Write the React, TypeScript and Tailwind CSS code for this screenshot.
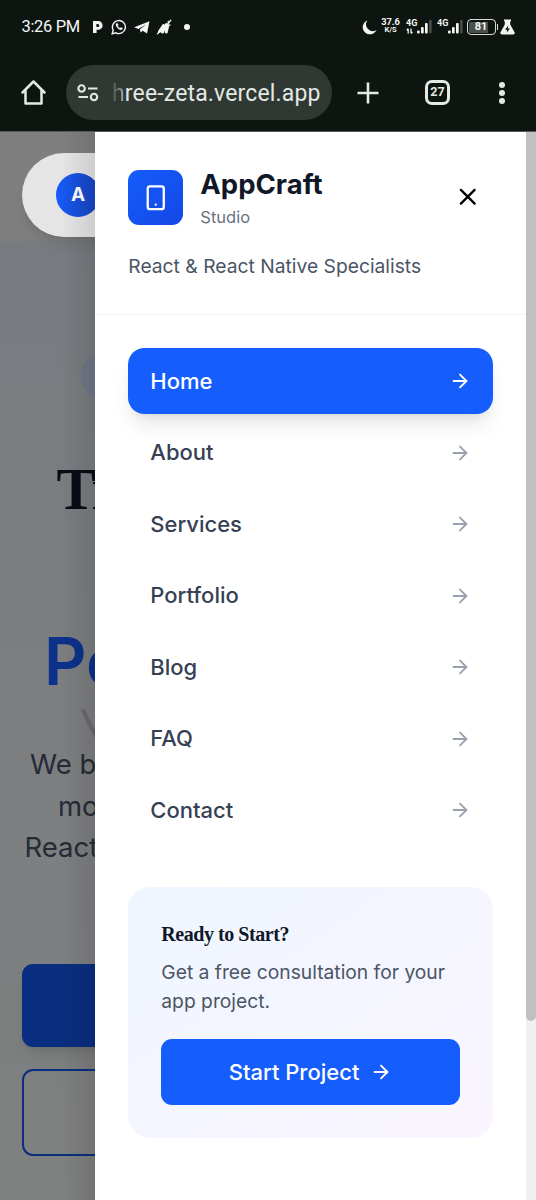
import { ArrowRight, Smartphone, X } from "lucide-react";

const navItems = ["Home", "About", "Services", "Portfolio", "Blog", "FAQ", "Contact"];

const Signal = ({ arrows }: { arrows?: boolean }) => (
  <svg className="w-[26px] h-4 shrink-0" viewBox="0 0 26 16" fill="#f4f6f4">
    <text x="0" y="7.4" fontSize="9" fontWeight="700" fontFamily="Roboto, sans-serif">
      4G
    </text>
    {arrows && (
      <path d="M2.2 14.5V9.8M.8 11.2 2.2 9.6M5 9.6v4.7M6.4 13 5 14.5" stroke="#f4f6f4" strokeWidth="1.3" fill="none" />
    )}
    <rect x="11" y="11.5" width="2.7" height="3" rx="1" />
    <rect x="15" y="8" width="2.7" height="6.5" rx="1" />
    <rect x="19" y="4" width="2.7" height="10.5" rx="1" />
    <rect x="23.2" y="0.8" width="2.4" height="13.7" rx="1" fill="#4b504c" />
  </svg>
);

const StatusBar = () => (
  <div className="flex h-[54px] items-center pl-[21.5px] pr-[21px] text-[#f4f6f4]">
    <span className="w-[58px] whitespace-nowrap text-[16.5px] tracking-[-0.35px]">3:26 PM</span>
    <svg className="ml-[12px] h-[14px] w-[11px]" viewBox="0 0 11 14" fill="#f4f6f4" fillRule="evenodd">
      <path d="M1 1H6.2a4.3 4.300 0 0 1 0 8.800H4.600V13H1ZM4.400 4V7H5.800a1.500 1.500 0 0 0 0-3Z" />
    </svg>
    <svg className="ml-[8px] h-[16px] w-[16px]" viewBox="0 0 16 16" fill="none" stroke="#f4f6f4">
      <path d="M1.2 14.8 2.2 11.2A6.5 6.5 0 1 1 4.8 13.8Z" strokeWidth="1.4" />
      <path d="M5.4 4.5c-.8.8-.5 2.3.8 3.9 1.3 1.6 3.5 2.8 4.8 2.2l.6-1.3-1.8-.9-.9.9c-1-.4-1.800-1.200-2.300-2.200l.7-.9-.7-1.700Z" fill="#f4f6f4" strokeWidth=".4" />
    </svg>
    <svg className="ml-[7px] h-[13px] w-[16px]" viewBox="0 0 16 13" fill="#f4f6f4">
      <path d="M15.500.2 13 12.600 8.700 9.700 6.700 11.600 5.800 8.400 12.200 3.300 4.400 7.900.2 6.200Z" />
    </svg>
    <svg className="ml-[6px] h-[17px] w-[16px]" viewBox="0 0 16 17" fill="none" stroke="#f4f6f4" strokeLinecap="round">
      <path d="M3.500 12.500 7.500 6.500M6.500 13l4-7.500M10.300 13l1.500-6.500" strokeWidth="3" />
      <path d="M1.500 14.800 4 11.500M11.500 5.500l3.300-4.300M12.300 4.500V2.500M12 7l2-1" strokeWidth="1.300" />
    </svg>
    <span className="ml-[12px] h-[6px] w-[6px] rounded-full bg-[#f4f6f4]" />

    <svg className="ml-auto h-[15px] w-[15px]" viewBox="0 0 15 15" fill="#f4f6f4">
      <path d="M5.4.4a7.2 7.2 0 1 0 9.1 9.7A6.8 6.8 0 0 1 5.4.4Z" />
    </svg>
    <div className="ml-[4px] mt-[-2px] flex w-[20px] flex-col items-center text-[9.3px] leading-[8px] font-bold">
      <span>37.6</span>
      <span className="text-[7.5px]">K/S</span>
    </div>
    <div className="ml-[5px] flex gap-[5px]">
      <Signal arrows />
      <Signal />
    </div>
    <div className="ml-[4px] flex h-[16px] w-[29px] items-center justify-center rounded-[4px] border-[1.5px] border-[#d9dcd9] p-[1.5px]">
      <span className="flex h-full w-full items-center justify-center rounded-[1px] bg-linear-to-r from-[#4b504c] from-80% to-transparent to-80% text-[11px] font-bold">
        81
      </span>
    </div>
    <span className="ml-[1px] h-[6px] w-[1.5px] bg-[#d9dcd9]" />
    <svg className="ml-[2px] h-[16px] w-[15px]" viewBox="0 0 15 16">
      <path d="M4 .5h7v1.8h-.8v3.2l4.3 7.7c.6 1.2 0 2.3-1.4 2.3H1.9C.5 15.500 0 14.400.5 13.200L4.800 5.500V2.300H4Z" fill="#f4f6f4" />
      <path d="M8.300 6.500 5 10.700h2.200L6.600 13.800l3.400-4.300H7.800Z" fill="#0e1511" />
    </svg>
  </div>
);

const BrowserBar = () => (
  <div className="flex h-[77px] items-center text-[#e3e9e4]">
    <svg className="ml-[20px] h-[27px] w-[27px]" viewBox="0 0 27 27" fill="none" stroke="currentColor" strokeWidth="2.5" strokeLinejoin="round" strokeLinecap="round">
      <path d="M2.500 13.500 13.500 2.500 24.500 13.500M5.500 11.500V24.500H21.500V11.500" />
    </svg>
    <div className="ml-[19px] flex h-[55px] w-[266px] items-center rounded-full bg-[#2f3832] pl-[11px]">
      <svg className="h-[20px] w-[22px]" viewBox="0 0 22 20" fill="none" stroke="currentColor" strokeWidth="2.1">
        <circle cx="4.600" cy="5.500" r="3.200" />
        <path d="M11 5.500h9.500M1.500 14h9.500" />
        <circle cx="17" cy="14" r="3.200" />
      </svg>
      <span className="mt-[3px] ml-[13px] whitespace-nowrap text-[23px] tracking-[0.15px]">
        <span className="bg-linear-to-r from-[#4b544e] to-[#a9b0ab] bg-clip-text text-transparent">h</span>
        ree-zeta.vercel.app
      </span>
    </div>
    <svg className="ml-[24px] h-[24px] w-[24px]" viewBox="0 0 24 24" stroke="currentColor" strokeWidth="2.600">
      <path d="M12 1.500v21M1.500 12h21" />
    </svg>
    <div className="ml-[45px] flex h-[25px] w-[25px] items-center justify-center rounded-[7px] border-[3px] border-[#e3e9e4] text-[12.5px] font-bold">
      27
    </div>
    <div className="ml-[49px] flex flex-col gap-[2px]">
      <span className="h-[6px] w-[6px] rounded-full bg-[#e3e9e4]" />
      <span className="h-[6px] w-[6px] rounded-full bg-[#e3e9e4]" />
      <span className="h-[6px] w-[6px] rounded-full bg-[#e3e9e4]" />
    </div>
  </div>
);

// The dimmed page that stays visible beside the drawer
const DimmedPage = () => (
  <div className="relative h-full w-[95px] shrink-0 overflow-hidden bg-[#7f7f7f]">
    <div className="h-[109px] pt-[21px] pl-[22px]">
      <div className="relative flex h-[84px] w-[400px] items-center rounded-full bg-[#e5e5e5] pl-[34px] shadow-lg">
        <div className="flex h-[44px] w-[44px] items-center justify-center rounded-full bg-linear-to-r from-[#155dfc] to-[#1742bd] text-[19px] font-bold text-white">
          A
        </div>
      </div>
    </div>
    <div className="h-[959px] bg-linear-to-b from-[#787b80] via-[#7c7e80] to-[#7f8080] pt-[110px] whitespace-nowrap">
      <div className="ml-[81px] h-[50px] w-[200px] rounded-full bg-[#6f7786]" />
      <h1 className="mt-[59px] ml-[56.5px] font-['Liberation_Serif',serif] text-[59px] leading-[59px] font-bold text-[#080c15]">
        Tr
      </h1>
      <div className="mt-[109px] ml-[44px] text-[66px] leading-[66px] font-semibold text-[#0b318a]">
        Pe
      </div>
      <div className="mt-[50px] text-[27.500px] leading-[41.500px] text-[#252b34]">
        <p className="ml-[30px]">We b</p>
        <p className="ml-[58px]">mo</p>
        <p className="ml-[24.5px]">React</p>
      </div>
      <div className="mt-[95px] ml-[22px] h-[83px] w-[400px] rounded-[11px] bg-[#0a2e7f] shadow-lg" />
      <div className="mt-[22px] ml-[22px] h-[87px] w-[400px] rounded-[11px] border-2 border-[#0a2e7f]" />
    </div>
    <svg className="absolute top-[574px] left-[78px] h-[40px] w-[17px]" viewBox="0 0 17 40">
      <path d="M5.500 5Q11 17 20 34" stroke="#686972" strokeWidth="4" strokeLinecap="round" fill="none" />
    </svg>
    <div className="absolute inset-y-0 right-0 w-[34px] bg-linear-to-r from-transparent to-black/10" />
  </div>
);

const Drawer = () => (
  <aside className="flex h-full w-[430.500px] shrink-0 flex-col bg-white">
    <header className="h-[183px] border-b border-[#f3f4f6] pr-[33px] pl-[33.300px] pt-[33px]">
      <div className="flex h-[65px] items-center">
        <div className="flex h-[55px] w-[55px] items-center justify-center rounded-[11px] bg-linear-to-br from-[#155dfc] to-[#1447e6]">
          <Smartphone className="h-[27.500px] w-[27.500px] text-white" />
        </div>
        <div className="ml-[17px]">
          <h2 className="text-[27.500px] leading-[38.500px] font-bold text-[#101828]">AppCraft</h2>
          <p className="text-[16.500px] leading-[26.500px] text-[#6a7282]">Studio</p>
        </div>
        <button className="mr-[11px] mb-[2px] ml-auto" aria-label="Close menu">
          <X className="h-[27.500px] w-[27.500px] text-black" />
        </button>
      </div>
      <p className="mt-[22px] text-[19.250px] leading-[29px] text-[#4a5565]">
        React &amp; React Native Specialists
      </p>
    </header>

    <nav className="flex flex-col gap-[5.500px] pr-[32.700px] pl-[33.300px] pt-[33px]">
      {navItems.map((item, i) => (
        <a
          key={item}
          href="#"
          className={`flex h-[66px] items-center justify-between rounded-[16.500px] px-[22px] text-[22px] font-medium ${
            i === 0 ? "bg-[#155dfc] text-white shadow-[0_14px_20px_-4px_rgb(0_0_0/0.1),0_5px_8px_-5px_rgb(0_0_0/0.1)]" : "text-[#364153]"
          }`}
        >
          {item}
          <ArrowRight className={`h-[22px] w-[22px] ${i === 0 ? "text-white" : "text-[#99a1af]"}`} />
        </a>
      ))}
    </nav>

    <section className="mr-[32.700px] ml-[33.300px] mt-[44px] h-[251px] rounded-[22px] bg-linear-to-br from-[#eff6ff] to-[#faf5ff] px-[33px] pt-[33px]">
      <h3 className="font-['Liberation_Serif',serif] text-[20px] leading-[28px] font-bold tracking-[-0.450px] text-[#101828]">
        Ready to Start?
      </h3>
      <p className="mt-[10px] text-[19.250px] leading-[29px] text-[#4a5565]">
        Get a free consultation for your app project.
      </p>
      <button className="mt-[23px] flex h-[66px] w-full items-center justify-center gap-[11px] rounded-[11px] bg-[#155dfc] text-[22px] font-medium text-white">
        Start Project
        <ArrowRight className="h-[22px] w-[22px]" />
      </button>
    </section>
  </aside>
);

export default function App() {
  return (
    <div className="h-[1200px] w-[536px] overflow-hidden bg-white font-['Inter',sans-serif]">
      <div className="h-[132px] border-b border-[#555a56] bg-[#0e1511] font-['Roboto',sans-serif]">
        <StatusBar />
        <BrowserBar />
      </div>
      <div className="flex h-[1068px]">
        <DimmedPage />
        <Drawer />
        <div className="flex-1 bg-[#f0f0f0]">
          <div className="h-[889px] rounded-b-full bg-[#c0c0c0]" />
        </div>
      </div>
    </div>
  );
}
